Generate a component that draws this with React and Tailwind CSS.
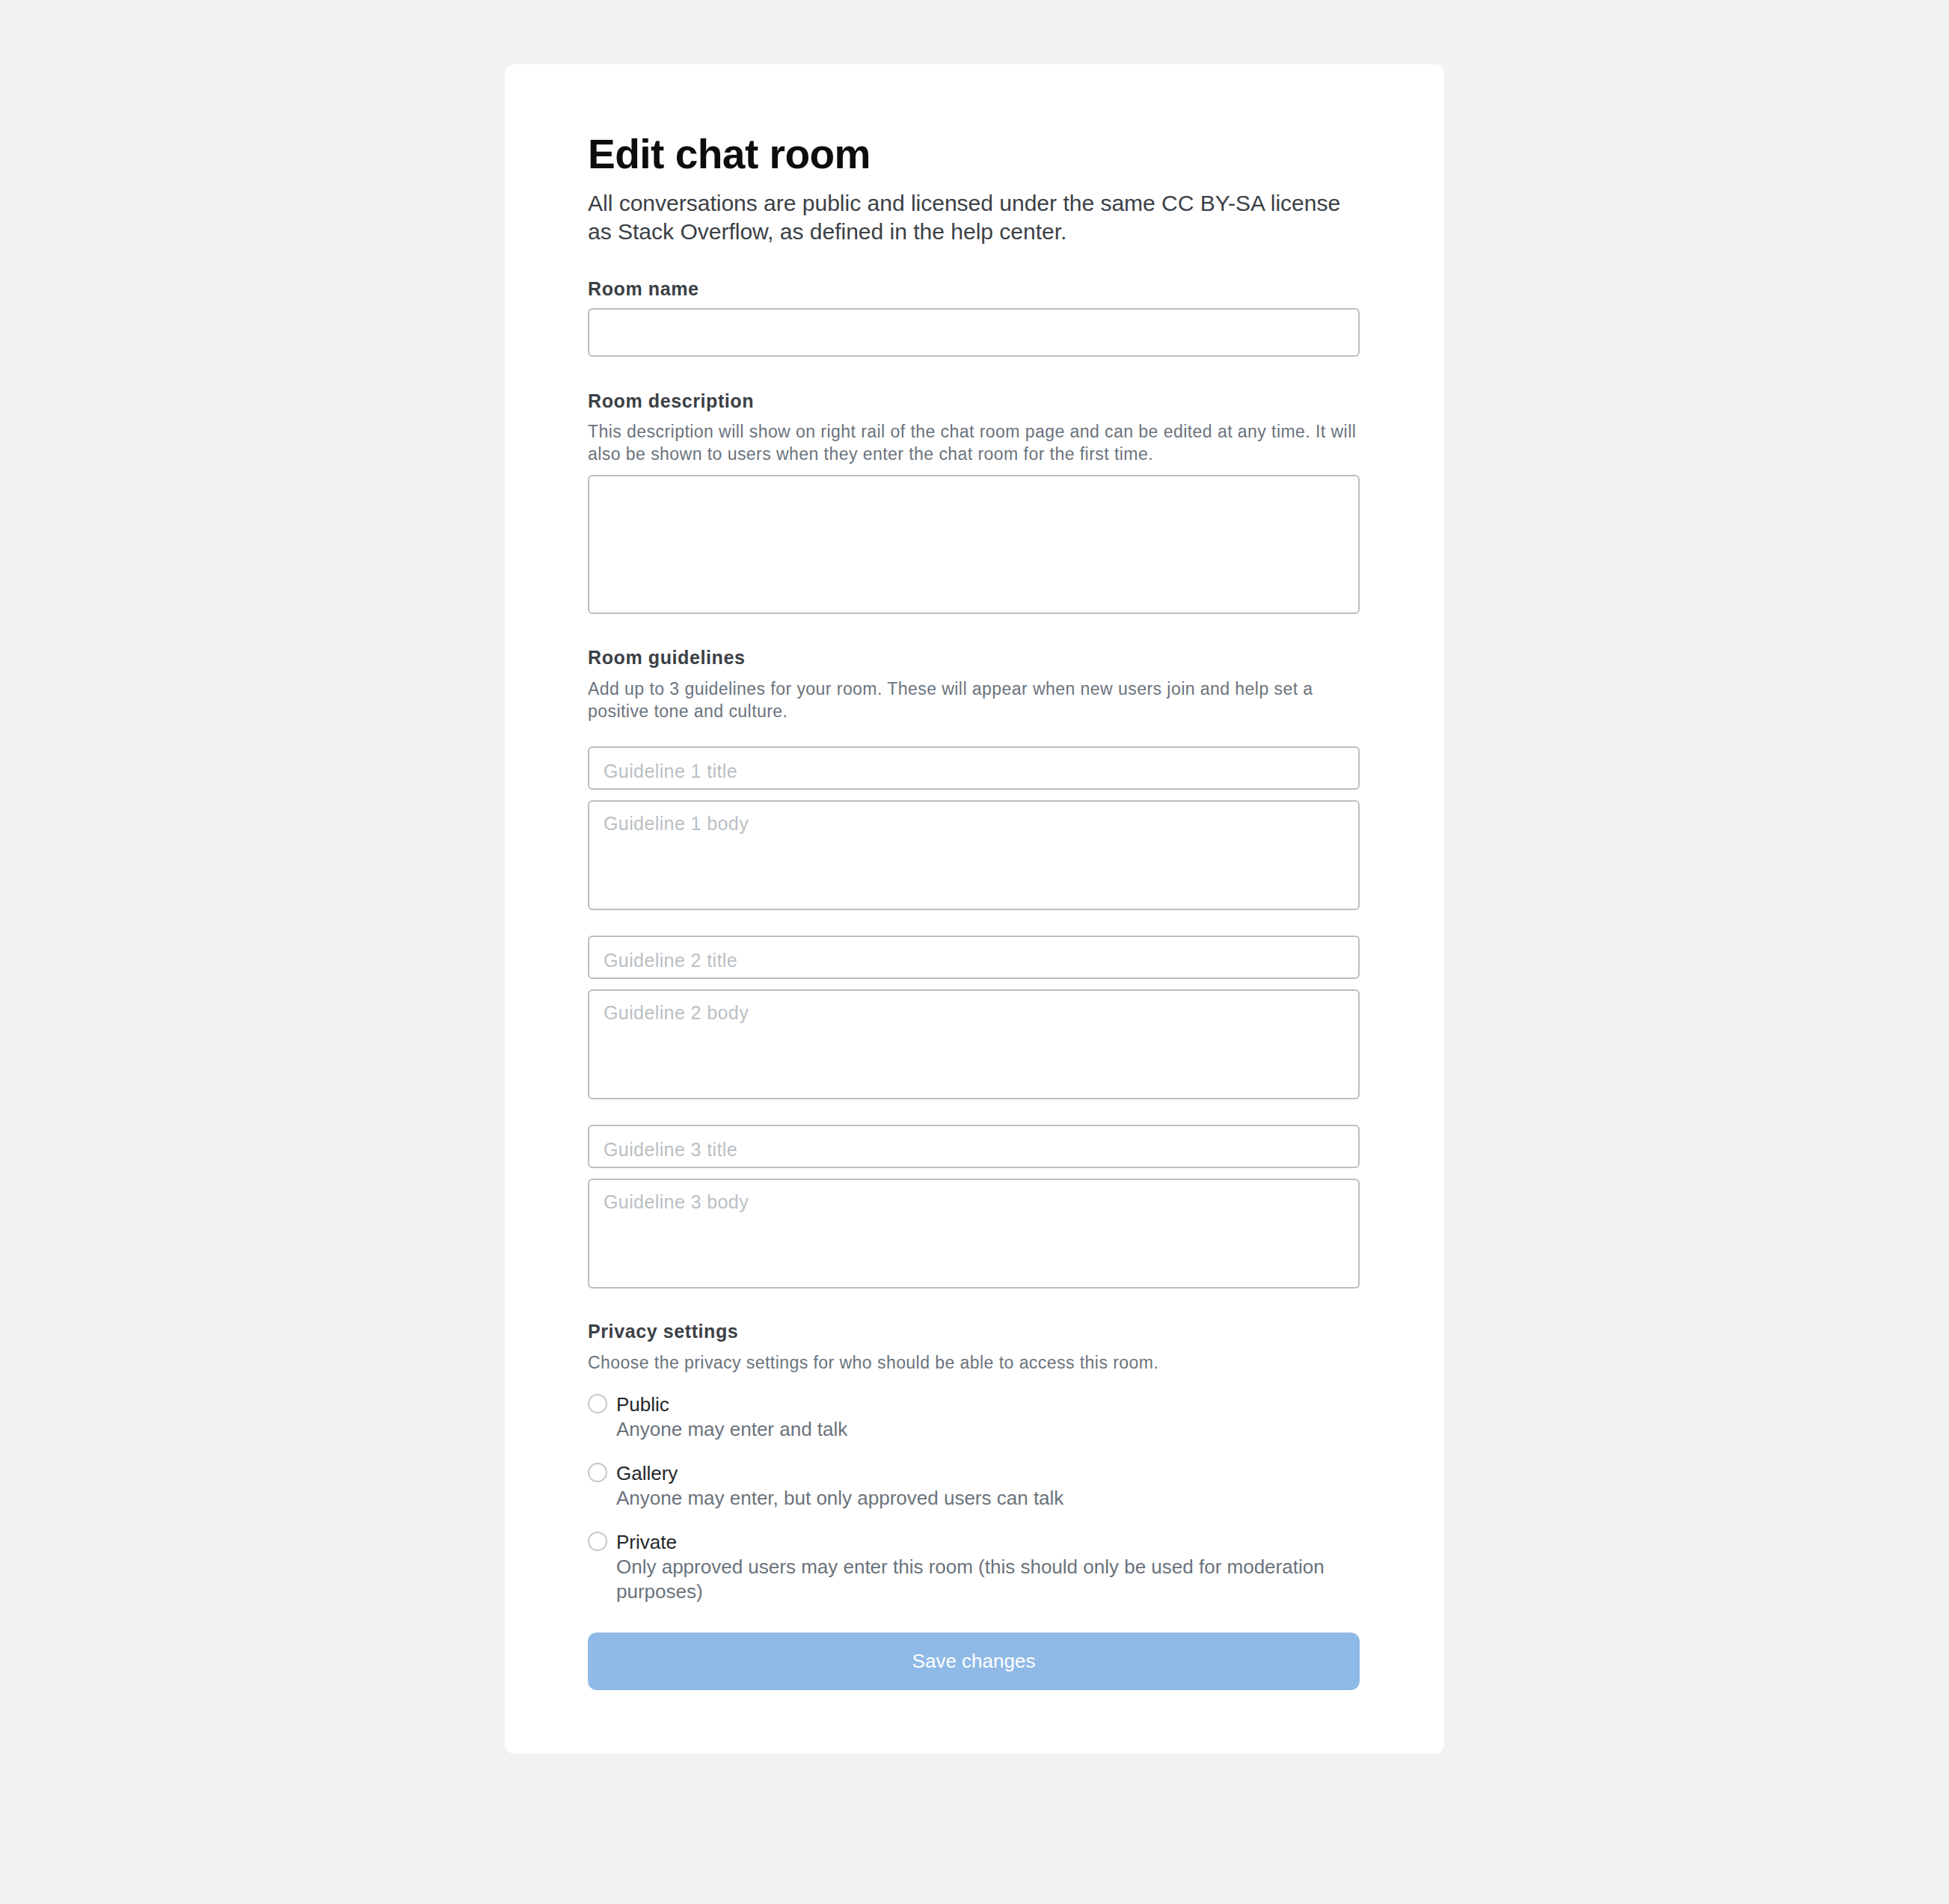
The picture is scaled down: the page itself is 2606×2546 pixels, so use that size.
import React from "react";

const font = { fontFamily: '"Liberation Sans", Arial, Helvetica, sans-serif' };

function Label({ children, className = "" }) {
  return (
    <label className={`block text-[25px] leading-[30px] tracking-[0.6px] font-bold text-[#3b4045] ${className}`}>
      {children}
    </label>
  );
}

function Desc({ children, className = "" }) {
  return (
    <p className={`text-[23px] leading-[30px] tracking-[0.45px] text-[#6a737c] ${className}`}>{children}</p>
  );
}

function Guideline({ n, className = "" }) {
  return (
    <div className={className}>
      <input
        type="text"
        placeholder={`Guideline ${n} title`}
        className="block w-full h-[58px] border-2 border-[#babfc4] rounded-[6px] bg-white pl-[19px] pr-[19px] pt-[8px] pb-0 text-[25px] tracking-[0.4px] text-[#0c0d0e] placeholder:text-[#babfc4] outline-none"
        style={font}
      />
      <textarea
        placeholder={`Guideline ${n} body`}
        className="block w-full mt-[14px] h-[147px] border-2 border-[#babfc4] rounded-[6px] bg-white px-[19px] pt-[15px] text-[25px] leading-[29px] tracking-[0.4px] text-[#0c0d0e] placeholder:text-[#babfc4] outline-none resize-none"
        style={font}
      />
    </div>
  );
}

function Radio({ title, sub, className = "" }) {
  return (
    <div className={`flex items-start gap-[12px] ${className}`}>
      <input
        type="radio"
        name="privacy"
        className="appearance-none shrink-0 mt-[2px] w-[26px] h-[26px] rounded-full border-2 border-[#c4c8cc] bg-white m-0"
      />
      <div className="text-[26px] leading-[33px]">
        <div className="text-[#232629]">{title}</div>
        <div className="text-[#6a737c]">{sub}</div>
      </div>
    </div>
  );
}

export default function App() {
  return (
    <div className="min-h-screen bg-[#f1f2f3] pt-[86px] pb-[201px]" style={font}>
      <div className="w-[1256px] mx-auto bg-white rounded-[12px] pt-[86px] pl-[111px] pr-[113px] pb-[85px]">
        <h1 className="text-[55px] leading-[68px] tracking-[-0.5px] font-bold text-[#0c0d0e]">Edit chat room</h1>
        <p className="mt-[13px] text-[30px] leading-[38px] text-[#3b4045]">
          All conversations are public and licensed under the same CC BY-SA license as Stack
          Overflow, as defined in the help center.
        </p>

        <Label className="mt-[42px]">Room name</Label>
        <input
          type="text"
          className="block mt-[11px] w-full h-[65px] border-2 border-[#babfc4] rounded-[6px] bg-white px-[19px] text-[24px] outline-none"
          style={font}
        />

        <Label className="mt-[44px]">Room description</Label>
        <Desc className="mt-[11px]">
          This description will show on right rail of the chat room page and can be edited at any
          time. It will also be shown to users when they enter the chat room for the first time.
        </Desc>
        <textarea
          className="block mt-[13px] w-full h-[186px] border-2 border-[#babfc4] rounded-[6px] bg-white px-[19px] pt-[15px] text-[24px] outline-none resize-none"
          style={font}
        />

        <Label className="mt-[43px]">Room guidelines</Label>
        <Desc className="mt-[12px]">
          Add up to 3 guidelines for your room. These will appear when new users join and help set
          a positive tone and culture.
        </Desc>
        <div className="mt-[32px] flex flex-col gap-[34px]">
          <Guideline n={1} />
          <Guideline n={2} />
          <Guideline n={3} />
        </div>

        <Label className="mt-[42px]">Privacy settings</Label>
        <Desc className="mt-[12px]">
          Choose the privacy settings for who should be able to access this room.
        </Desc>
        <div className="mt-[25px] flex flex-col gap-[26px]">
          <Radio title="Public" sub="Anyone may enter and talk" />
          <Radio title="Gallery" sub="Anyone may enter, but only approved users can talk" />
          <Radio
            title="Private"
            sub="Only approved users may enter this room (this should only be used for moderation purposes)"
          />
        </div>

        <button
          type="button"
          className="block mt-[38px] w-full h-[77px] rounded-[12px] bg-[#8fb9e6] text-white text-[26px] leading-[31px]"
          style={font}
        >
          Save changes
        </button>
      </div>
    </div>
  );
}
